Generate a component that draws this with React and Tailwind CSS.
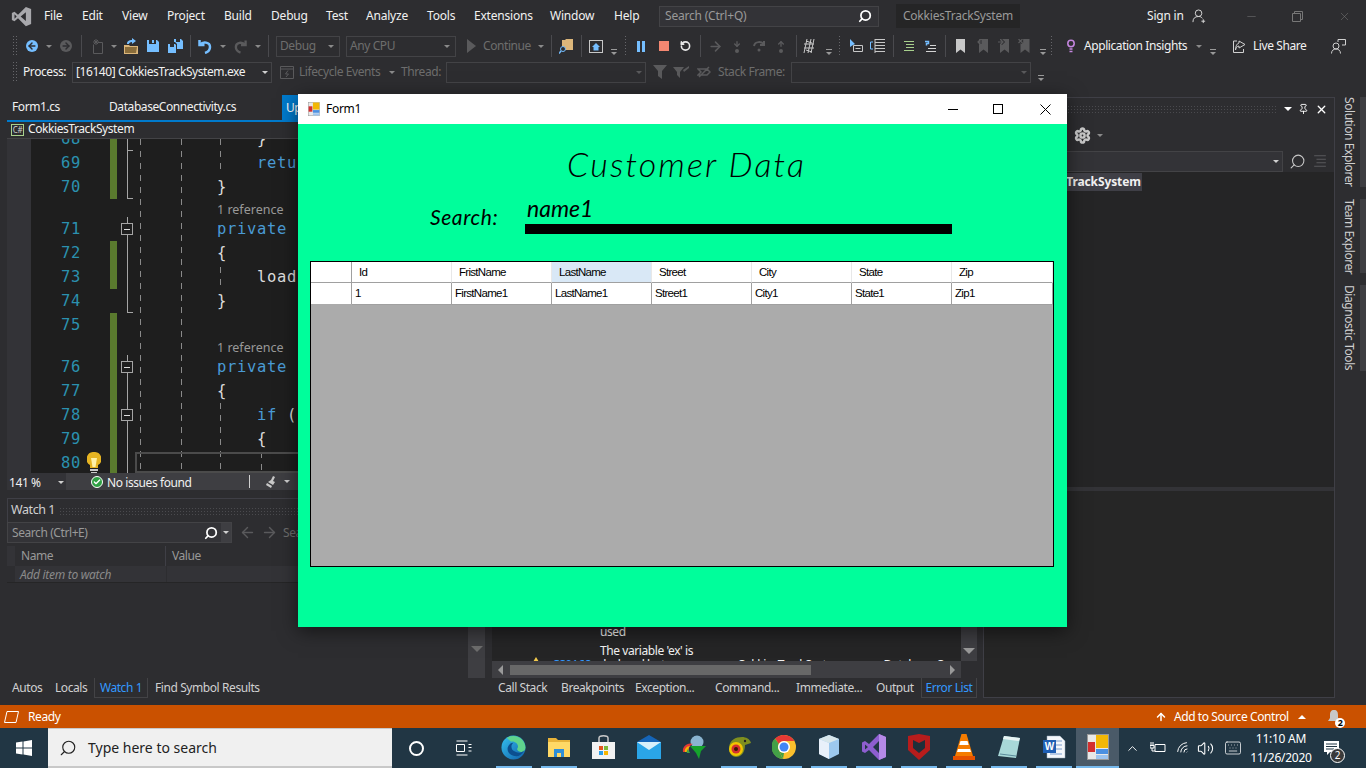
import { ArrowLeft, ArrowRight, ChevronUp, Search, Settings, Pin, X, Minus, Wifi, Volume2, Keyboard, RotateCw, ArrowUp, ArrowDown, Check } from "lucide-react";

const ui = "font-['Noto_Sans','Open_Sans',sans-serif]";
const mono = "font-['DejaVu_Sans_Mono','Liberation_Mono',monospace]";

function Caret({ className = "", tone = "border-t-[#8a8a8a]", size = "border-x-[3px] border-t-[3px]" }) {
  return <span className={`w-0 h-0 shrink-0 border-x-transparent ${size} ${tone} ${className}`}></span>;
}

function Overflow({ className = "" }) {
  return (
    <span className={`w-[6px] shrink-0 flex flex-col items-center gap-[2px] mt-[12px] ${className}`}>
      <span className="w-[6px] h-px bg-[#999]"></span>
      <span className="w-0 h-0 border-x-[3px] border-x-transparent border-t-[3px] border-t-[#999]"></span>
    </span>
  );
}

function Sep({ className = "" }) {
  return <span className={`w-px h-[22px] shrink-0 bg-[#4a4a4e] ${className}`}></span>;
}

function Grip({ className = "w-[5px]" }) {
  return <span className={`h-[22px] shrink-0 bg-[radial-gradient(#66666a_1px,transparent_1px)] bg-[length:3px_3px] ${className}`}></span>;
}

function Combo({ children, className = "" }) {
  return (
    <div className={`h-[21px] shrink-0 border border-[#434346] flex items-center pl-[3px] pr-[5px] justify-between ${className}`}>
      <span className="whitespace-nowrap">{children}</span>
      <Caret />
    </div>
  );
}

function Disk({ className = "", color = "#75beff" }) {
  return (
    <svg viewBox="0 0 12 12" className={`shrink-0 ${className}`}>
      <path d="M0 0h2v4h7V0h1l2 2v10H0z" fill={color} />
      <rect x="5" y="0" width="2" height="3" fill={color} />
    </svg>
  );
}

function Bookmark({ className = "", color = "#5a5a5c", children }) {
  return (
    <svg viewBox="0 0 11 14" className={`shrink-0 ${className}`}>
      <path d="M2 0h9v14l-4.500-3.500L2 14z" fill={color} />
      {children}
    </svg>
  );
}

function Lines({ className = "", color = "#d4d4d4" }) {
  return (
    <svg viewBox="0 0 12 12" className={`shrink-0 ${className}`} stroke={color} strokeWidth="1">
      <path d="M1 1.500h10M3 4.500h8M3 7.500h8M1 10.500h10" />
    </svg>
  );
}

function MenuBar() {
  const items = [
    ["File", "ml-[12px] w-[38px]"],
    ["Edit", "w-[40px]"],
    ["View", "w-[45px]"],
    ["Project", "w-[57px]"],
    ["Build", "w-[47px]"],
    ["Debug", "w-[55px]"],
    ["Test", "w-[40px]"],
    ["Analyze", "w-[61px]"],
    ["Tools", "w-[47px]"],
    ["Extensions", "w-[76px]"],
    ["Window", "w-[64px]"],
    ["Help", "w-[45px]"],
  ];
  return (
    <div className="h-[32px] shrink-0 flex items-center text-[#f1f1f1] tracking-[-0.2px]">
      <svg viewBox="0 0 24 24" className="ml-[11px] w-[21px] h-[21px] shrink-0" fill="#a8a8ac">
        <path fillRule="evenodd" d="M17 1 8 10 4 6.500 1 8v8l3 1.500L8 14l9 9 6-2.500V3.500zM17 7v10l-6-5zM4 9.500 6.500 12 4 14.500z" />
      </svg>
      {items.map(([label, w]) => (
        <span key={label} className={`shrink-0 whitespace-nowrap ${w}`}>{label}</span>
      ))}
      <div className="w-[220px] h-[21px] shrink-0 border border-[#434346] bg-[#333337] flex items-center justify-between pl-[5px] pr-[6px] text-[#999]">
        <span>Search (Ctrl+Q)</span>
        <Search className="w-[14px] h-[14px] text-white -scale-x-100" strokeWidth={3} />
      </div>
      <div className="ml-[17px] w-[124px] h-[24px] shrink-0 bg-[#252526] text-[#999] flex items-center justify-center">CokkiesTrackSystem</div>
      <span className="ml-[127px] w-[45px] shrink-0 whitespace-nowrap">Sign in</span>
      <svg viewBox="0 0 16 16" className="w-[15px] h-[15px] shrink-0 text-[#ddd]" fill="none" stroke="currentColor">
        <circle cx="7" cy="4.500" r="3.500" />
        <path d="M1 14c0-4 2-6 6-6 2 0 3 .5 4 2M12 11v4M10 13h4" />
      </svg>
      <Minus className="ml-[38px] w-[13px] h-[13px] text-[#777]" strokeWidth={1} />
      <svg viewBox="0 0 11 11" className="ml-[34px] w-[11px] h-[11px]" fill="none" stroke="#777">
        <path d="M.500 2.500h8v8h-8zM2.500 2.500v-2h8v8h-2" />
      </svg>
      <X className="ml-[35px] w-[13px] h-[13px] text-[#777]" strokeWidth={1} />
    </div>
  );
}

function DebugToolbar() {
  return (
    <div className="h-[28px] shrink-0 flex items-center pl-[12px] text-[#6d6d6d]">
      <Grip />
      <span className="ml-[9px] w-[12px] h-[12px] rounded-full bg-[#75beff] shrink-0 flex items-center justify-center">
        <ArrowLeft className="w-[10px] h-[10px] text-[#2d2d30]" strokeWidth={3.500} />
      </span>
      <Caret className="ml-[8px]" />
      <span className="ml-[8px] w-[12px] h-[12px] rounded-full bg-[#5a5a5c] shrink-0 flex items-center justify-center">
        <ArrowRight className="w-[10px] h-[10px] text-[#2d2d30]" strokeWidth={3.500} />
      </span>
      <Sep className="ml-[9px]" />
      <svg viewBox="0 0 13 15" className="ml-[8px] w-[13px] h-[15px] shrink-0" fill="none" stroke="#5a5a5c">
        <path d="M3.500 5.500v9h9v-11H8M6 0v6M3 3h6M4 1l4 4M8 1 4 5" />
      </svg>
      <Caret className="ml-[8px]" />
      <svg viewBox="0 0 14 16" className="ml-[7px] w-[14px] h-[16px] shrink-0">
        <path d="M0 7h5l1 1h8v8H0z" fill="#dcb67a" />
        <path d="M1 9h12l-1 6H1z" fill="#8a6d3b" />
        <path d="M3 6c0-3 2-4 5-4V0l4 3-4 3V4C6 4 5 5 5 6z" fill="#75beff" />
      </svg>
      <Disk className="ml-[9px] w-[12px] h-[12px]" />
      <svg viewBox="0 0 15 14" className="ml-[9px] w-[15px] h-[14px] shrink-0" fill="#75beff">
        <path d="M0 5h2v3h4V5h1l1 1v8H0z" />
        <path d="M6 0h2v3h4V0h1l2 2v8H9V5L7 3H6z" />
      </svg>
      <Sep className="ml-[7px]" />
      <svg viewBox="0 0 14 15" className="ml-[7px] w-[14px] h-[15px] shrink-0" fill="none" stroke="#75beff" strokeWidth="2.500">
        <path d="M1.500 1v5h5M2 6c3-4 10-3 10 2 0 3-2 5-5 6" />
      </svg>
      <Caret className="ml-[8px]" />
      <svg viewBox="0 0 14 15" className="ml-[8px] w-[13px] h-[15px] shrink-0" fill="none" stroke="#5a5a5c" strokeWidth="2.500">
        <path d="M12.500 1v5h-5M12 6C9 2 2 3 2 8c0 3 2 5 5 6" />
      </svg>
      <Caret className="ml-[8px]" />
      <Sep className="ml-[7px]" />
      <Combo className="ml-[7px] w-[64px]">Debug</Combo>
      <Combo className="ml-[6px] w-[110px]">Any CPU</Combo>
      <span className="ml-[11px] w-0 h-0 shrink-0 border-y-[7px] border-y-transparent border-l-[9px] border-l-[#5a5a5c]"></span>
      <span className="ml-[7px] w-[49px] shrink-0">Continue</span>
      <Caret className="ml-[6px]" />
      <Sep className="ml-[7px]" />
      <svg viewBox="0 0 14 16" className="ml-[7px] w-[14px] h-[16px] shrink-0">
        <path d="M3 2h3l1-1h7v11H3z" fill="#dcb67a" />
        <circle cx="4" cy="11" r="2.500" fill="#2d2d30" stroke="#75beff" />
        <path d="M2 13 0 15.500" stroke="#75beff" strokeWidth="1.500" />
      </svg>
      <Sep className="ml-[8px]" />
      <svg viewBox="0 0 14 13" className="ml-[7px] w-[14px] h-[13px] shrink-0">
        <rect x=".5" y=".5" width="13" height="12" fill="none" stroke="#c8c8c8" />
        <path d="M7 3 3 7h1.500v3.500h5V7H11z" fill="#75beff" />
      </svg>
      <Overflow className="ml-[8px]" />
      <Grip className="ml-[7px] w-[4px]" />
      <span className="ml-[9px] w-[8px] h-[11px] shrink-0 border-x-[3px] border-x-[#75beff]"></span>
      <span className="ml-[14px] w-[10px] h-[10px] shrink-0 bg-[#f48771]"></span>
      <RotateCw className="ml-[11px] w-[11px] h-[12px] shrink-0 text-[#e8e8e8] -scale-x-100" strokeWidth={3.500} />
      <Sep className="ml-[9px]" />
      <ArrowRight className="ml-[7px] w-[15px] h-[15px] shrink-0 text-[#5a5a5c]" strokeWidth={2.500} />
      <span className="ml-[10px] w-[7px] shrink-0 flex flex-col items-center text-[#5a5a5c]">
        <ArrowDown className="w-[8px] h-[8px]" strokeWidth={4} />
        <span className="w-[4px] h-[4px] mt-px rounded-full bg-[#5a5a5c]"></span>
      </span>
      <svg viewBox="0 0 12 12" className="ml-[13px] w-[12px] h-[12px] shrink-0" fill="none" stroke="#5a5a5c" strokeWidth="2">
        <path d="M1 6c1-5 8-5 10-1M11 1v4H7" />
        <circle cx="6" cy="10" r="1.500" fill="#5a5a5c" stroke="none" />
      </svg>
      <span className="ml-[12px] w-[8px] shrink-0 flex flex-col items-center text-[#5a5a5c]">
        <ArrowUp className="w-[8px] h-[8px]" strokeWidth={4} />
        <span className="w-[4px] h-[4px] mt-px rounded-full bg-[#5a5a5c]"></span>
      </span>
      <Sep className="ml-[11px]" />
      <svg viewBox="0 0 12 16" className="ml-[6px] w-[12px] h-[16px] shrink-0" fill="none" stroke="#c8c8c8">
        <path d="M1 6h10M1 10h10M4 1 1 15M8 1 5 15M11 1 8 15M3 3l6 2M3 12l6 2" />
      </svg>
      <Overflow className="ml-[11px]" />
      <Grip className="ml-[6px] w-[4px]" />
      <svg viewBox="0 0 13 14" className="ml-[8px] w-[13px] h-[14px] shrink-0">
        <path d="M0 0l5 5-2 1-3 2z" fill="#75beff" />
        <path d="M3.500 6.500h9v6h-9zM5.500 9.500h5" fill="none" stroke="#c8c8c8" />
      </svg>
      <svg viewBox="0 0 15 14" className="ml-[7px] w-[15px] h-[14px] shrink-0" fill="none">
        <path d="M3 3H.5v7H3M1 0v0" stroke="#75beff" />
        <path d="M5 .5h10M5 3.500h10M5 6.500h10M5 9.500h10M5 12.500h10M5 0v14" stroke="#c8c8c8" />
      </svg>
      <Sep className="ml-[8px]" />
      <Lines className="ml-[9px] w-[12px] h-[12px]" color="#a8d08d" />
      <svg viewBox="0 0 11 13" className="ml-[10px] w-[11px] h-[13px] shrink-0" fill="none" strokeWidth="1">
        <path d="M0 1.500h3.500v2H1.500v2" stroke="#75beff" strokeWidth="1.500" />
        <path d="M5 5.500h6M3 8.500h8M1 11.500h10" stroke="#d4d4d4" />
      </svg>
      <Sep className="ml-[9px]" />
      <Bookmark className="ml-[8px] w-[11px] h-[14px]" color="#c8c8c8" />
      <Bookmark className="ml-[12px] w-[11px] h-[14px]">
        <path d="M0 3h5M2.500 1 0 3l2.500 2" fill="none" stroke="#2d2d30" strokeWidth="3" />
        <path d="M1 3h5M3 1 1 3l2 2" fill="none" stroke="#5a5a5c" strokeWidth="1.200" />
      </Bookmark>
      <Bookmark className="ml-[10px] w-[11px] h-[14px]">
        <path d="M0 3h5M3 1l2 2-2 2" fill="none" stroke="#2d2d30" strokeWidth="3" />
        <path d="M0 3h5M3 1l2 2-2 2" fill="none" stroke="#5a5a5c" strokeWidth="1.200" />
      </Bookmark>
      <Bookmark className="ml-[9px] w-[12px] h-[14px]">
        <path d="M0 0l4 4M4 0 0 4" fill="none" stroke="#2d2d30" strokeWidth="3" />
        <path d="M0 0l4 4M4 0 0 4" fill="none" stroke="#5a5a5c" strokeWidth="1.200" />
      </Bookmark>
      <Overflow className="ml-[10px]" />
      <Grip className="ml-[4px] w-[4px]" />
      <svg viewBox="0 0 8 15" className="ml-[13px] w-[8px] h-[15px] shrink-0" fill="none" stroke="#c586e0" strokeWidth="1.500">
        <circle cx="4" cy="4.500" r="3.200" />
        <path d="M2.500 10h3M2.500 12.500h3M4 14.500h0" />
      </svg>
      <span className="ml-[9px] w-[105px] shrink-0 whitespace-nowrap text-[#f1f1f1]">Application Insights</span>
      <Caret className="ml-[7px]" />
      <Overflow className="ml-[8px]" />
      <svg viewBox="0 0 13 13" className="ml-[17px] w-[13px] h-[13px] shrink-0" fill="none" stroke="#d0d0d0">
        <path d="M4 1H.5v11.500h10V9M6 1l6 3.500L6 8V6C4 6 3 8 2.500 10 2.500 6 4 3.500 6 3z" />
      </svg>
      <span className="ml-[7px] w-[53px] shrink-0 whitespace-nowrap text-[#f1f1f1]">Live Share</span>
      <svg viewBox="0 0 15 15" className="ml-[25px] w-[15px] h-[15px] shrink-0" fill="none" stroke="#d0d0d0">
        <circle cx="5" cy="7" r="3" />
        <path d="M.5 14.500c0-3 2-4.500 4.500-4.500s4.500 1.500 4.500 4.500M7 3V.5h7.500V6H11" />
      </svg>
    </div>
  );
}

function ProcessToolbar() {
  return (
    <div className="h-[24px] shrink-0 flex items-center pl-[12px] text-[#6d6d6d]">
      <Grip />
      <span className="ml-[6px] w-[42px] shrink-0 text-[#f1f1f1]">Process:</span>
      <div className="ml-[7px] w-[200px] h-[21px] shrink-0 border border-[#434346] text-[#f1f1f1] flex items-center justify-between pl-[3px] pr-[3px]">
        <span className="whitespace-nowrap">[16140] CokkiesTrackSystem.exe</span>
        <Caret tone="border-t-[#d0d0d0]" />
      </div>
      <svg viewBox="0 0 14 13" className="ml-[8px] w-[14px] h-[13px] shrink-0" fill="none" stroke="#5a5a5c">
        <path d="M.5.500h13v12H.5zM.5 3h13M8 4.500 5.500 8h3L6 11" />
      </svg>
      <span className="ml-[5px] w-[84px] shrink-0 whitespace-nowrap">Lifecycle Events</span>
      <Caret className="ml-[6px]" />
      <span className="ml-[6px] w-[41px] shrink-0">Thread:</span>
      <div className="ml-[4px] w-[200px] h-[21px] shrink-0 border border-[#434346] flex items-center justify-end pr-[3px]">
        <Caret tone="border-t-[#5a5a5c]" />
      </div>
      <svg viewBox="0 0 14 14" className="ml-[7px] w-[14px] h-[14px] shrink-0" fill="#5a5a5c">
        <path d="M0 0h14L9 6v8L5 11V6z" />
      </svg>
      <svg viewBox="0 0 16 14" className="ml-[6px] w-[16px] h-[14px] shrink-0" fill="#5a5a5c">
        <path d="M0 2h11L7 7v6L4 10V7zM10 5l6-4v2l-5 4z" />
      </svg>
      <svg viewBox="0 0 14 12" className="ml-[8px] w-[14px] h-[12px] shrink-0" fill="none" stroke="#5a5a5c" strokeWidth="1.500">
        <path d="M1 3h9l3 3-3 3H1l3-3zM2 11 12 1" />
      </svg>
      <span className="ml-[7px] w-[67px] shrink-0 whitespace-nowrap">Stack Frame:</span>
      <div className="ml-[6px] w-[240px] h-[21px] shrink-0 border border-[#434346] flex items-center justify-end pr-[3px]">
        <Caret tone="border-t-[#5a5a5c]" />
      </div>
      <Overflow className="ml-[7px]" />
    </div>
  );
}

function CodeRow({ n, green, box, tick, noLine, bulb, children }) {
  return (
    <div className="h-[24px] shrink-0 flex items-center">
      <div className="w-[24px] h-full shrink-0 bg-[#333337]"></div>
      <div className="w-[50px] shrink-0 text-right text-[#2b91af] pt-[2px]">{n}</div>
      <div className="w-[29px] h-full shrink-0 flex items-center justify-center">
        {bulb && (
          <svg viewBox="0 0 14 23" className="w-[14px] h-[23px] -translate-x-[2px]">
            <path d="M7 0a7 7 0 0 1 4 13v3H3v-3A7 7 0 0 1 7 0z" fill="#e6b422" />
            <path d="M4 6h6L8.500 15h-3z" fill="#fff1a8" />
            <rect x="3" y="17" width="8" height="2" fill="#c8c8c8" />
            <rect x="4" y="20" width="6" height="2" fill="#c8c8c8" />
          </svg>
        )}
      </div>
      <div className={`w-[7px] h-full shrink-0 ${green ? "bg-[#5a7a2e]" : ""}`}></div>
      <div className="w-[20px] h-full shrink-0 relative flex items-center justify-center">
        {!noLine && <span className="absolute left-[10px] top-0 bottom-0 w-px bg-[#a5a5a5]"></span>}
        {tick && <span className="absolute left-[10px] bottom-0 w-[6px] h-px bg-[#a5a5a5]"></span>}
        {box && (
          <span className="relative w-[12px] h-[12px] border border-[#a5a5a5] bg-[#1e1e1e] flex items-center justify-center">
            <span className="w-[6px] h-px bg-[#dcdcdc]"></span>
          </span>
        )}
      </div>
      <div className="w-[80px] shrink-0"></div>
      <div className="whitespace-pre text-[#dcdcdc] pt-[2px]">{children}</div>
    </div>
  );
}

function LensRow({ green }) {
  return (
    <div className="h-[18px] shrink-0 flex items-center">
      <div className="w-[24px] h-full shrink-0 bg-[#333337]"></div>
      <div className="w-[79px] shrink-0"></div>
      <div className={`w-[7px] h-full shrink-0 ${green ? "bg-[#5a7a2e]" : ""}`}></div>
      <div className="w-[100px] shrink-0"></div>
      <span className={`text-[12.500px] tracking-normal text-[#999] pt-[4px] ${ui}`}>1 reference</span>
    </div>
  );
}

const kw = "text-[#4a9ad4]";

function Editor() {
  const guides = ["left-[133px] top-0 h-[334px]", "left-[174px] top-0 h-[334px]", "left-[213px] top-0 h-[34px]", "left-[213px] top-[128px] h-[20px]", "left-[213px] top-[264px] h-[70px]", "left-[254px] top-[313px] h-[21px]"];
  return (
    <div className={`h-[334px] shrink-0 bg-[#1e1e1e] relative overflow-hidden text-[15.500px] tracking-[0.67px] ${mono}`}>
      <div className="flex flex-col -mt-[12px]">
        <CodeRow n="68" green tick>{"    }"}</CodeRow>
        <CodeRow n="69" green><span className={kw}>{"    return"}</span></CodeRow>
        <CodeRow n="70" green tick>{"}"}</CodeRow>
        <LensRow />
        <CodeRow n="71" box><span className={kw}>private</span></CodeRow>
        <CodeRow n="72" green>{"{"}</CodeRow>
        <CodeRow n="73" green>{"    load"}</CodeRow>
        <CodeRow n="74" tick>{"}"}</CodeRow>
        <CodeRow n="75" green noLine></CodeRow>
        <LensRow green />
        <CodeRow n="76" green box><span className={kw}>private</span></CodeRow>
        <CodeRow n="77" green>{"{"}</CodeRow>
        <CodeRow n="78" green box><span className={kw}>{"    if"}</span>{" ("}</CodeRow>
        <CodeRow n="79" green>{"    {"}</CodeRow>
        <CodeRow n="80" green bulb></CodeRow>
      </div>
      {guides.map((g) => (
        <span key={g} className={`absolute w-px bg-[repeating-linear-gradient(to_bottom,#8a8a8a_0,#8a8a8a_6px,transparent_6px,transparent_12px)] ${g}`}></span>
      ))}
      <span className="absolute left-[128px] top-[313px] w-[500px] h-[21px] border-2 border-[#4b4b4b]"></span>
    </div>
  );
}

function EditorArea() {
  return (
    <div className="h-[395px] shrink-0 flex flex-col">
      <div className="h-[25px] shrink-0 flex items-center relative text-[#f1f1f1]">
        <span className="ml-[5px] w-[97px] shrink-0 pb-[2px]">Form1.cs</span>
        <span className="w-[173px] shrink-0 whitespace-nowrap pb-[2px]">DatabaseConnectivity.cs</span>
        <span className="h-full w-[60px] bg-[#007acc] text-white pl-[4px] flex items-center">Up</span>
      </div>
      <div className="h-[2px] shrink-0 bg-[#007acc]"></div>
      <div className="h-[17px] shrink-0 flex items-center text-[#f1f1f1] border-b border-[#434346] bg-[#2d2d30]">
        <span className="ml-[4px] w-[13px] h-[12px] shrink-0 border border-[#a8d08d] text-[8px] leading-[10px] text-center text-[#d0d0d0]">C#</span>
        <span className="ml-[4px] pb-[2px]">CokkiesTrackSystem</span>
      </div>
      <Editor />
      <div className="h-[17px] shrink-0 flex items-center bg-[#3e3e42] text-[#f1f1f1]">
        <div className="w-[59px] h-full shrink-0 bg-[#333337] flex items-center justify-between pl-[2px] pr-[2px] pt-[2px]">
          <span>141 %</span>
          <Caret tone="border-t-[#d0d0d0]" />
        </div>
        <span className="ml-[25px] w-[12px] h-[12px] rounded-full bg-[#2ea043] border border-white shrink-0 flex items-center justify-center">
          <Check className="w-[8px] h-[8px] text-white" strokeWidth={4} />
        </span>
        <span className="ml-[4px] w-[85px] shrink-0 whitespace-nowrap pt-[2px]">No issues found</span>
        <span className="ml-[57px] w-px h-[13px] bg-[#d0d0d0] shrink-0"></span>
        <svg viewBox="0 0 12 12" className="ml-[15px] w-[12px] h-[12px] shrink-0" fill="#c8c8c8">
          <path d="M8 0l2 1-2 4 2 1-2 3-5-3 3-2 2-4zM2 7l5 3-1 2-5-3z" />
        </svg>
        <Caret className="ml-[7px]" tone="border-t-[#d0d0d0]" />
      </div>
    </div>
  );
}

function Watch() {
  return (
    <div className="w-[478px] shrink-0 flex flex-col">
      <div className="h-[24px] shrink-0 flex items-center border-t border-l border-[#3f3f46] text-[#d0d0d0]">
        <span className="ml-[3px] w-[48px] shrink-0 text-[12.500px]">Watch 1</span>
        <span className="flex-1 h-[8px] mr-2 bg-[radial-gradient(#4a4a4e_1px,transparent_1px)] bg-[length:3px_3px]"></span>
      </div>
      <div className="h-[21px] shrink-0 flex items-center">
        <div className="w-[225px] h-full shrink-0 bg-[#333337] border border-[#434346] flex items-center justify-between pl-[4px] text-[#999]">
          <span>Search (Ctrl+E)</span>
          <div className="flex items-center h-full">
            <Search className="w-[14px] h-[14px] text-white -scale-x-100" strokeWidth={3} />
            <span className="ml-[3px] w-[10px] h-full bg-[#3e3e42] flex items-center justify-center"><Caret tone="border-t-[#d0d0d0]" /></span>
          </div>
        </div>
        <ArrowLeft className="ml-[7px] w-[17px] h-[17px] text-[#5a5a5c]" strokeWidth={2} />
        <ArrowRight className="ml-[5px] w-[17px] h-[17px] text-[#5a5a5c]" strokeWidth={2} />
        <span className="ml-[5px] text-[#6d6d6d]">Search Depth:</span>
      </div>
      <div className="h-[23px] shrink-0 flex items-center text-[#999] pt-[3px]">
        <span className="w-[159px] h-full shrink-0 pl-[6px] flex items-center border-l-[8px] border-[#333337] border-r border-r-[#3f3f46]">Name</span>
        <span className="pl-[6px]">Value</span>
      </div>
      <div className="h-[17px] shrink-0 flex items-center bg-[#333337] border-b border-[#252526] text-[#8a8a8a] italic">
        <span className="w-[160px] h-full shrink-0 pl-[5px] pt-[2px] flex items-center border-l-[8px] border-[#2d2d30] border-r border-r-[#2d2d30] whitespace-nowrap tracking-[-0.3px]">Add item to watch</span>
      </div>
      <div className="flex-1 flex justify-end">
        <div className="w-[17px] bg-[#3e3e42] flex flex-col justify-end items-center pb-[26px]">
          <Caret size="border-x-[6px] border-t-[6px]" tone="border-t-[#6d6d6d]" />
        </div>
      </div>
      <div className="h-[20px] shrink-0 flex items-center text-[#d0d0d0] relative">
        <span className="ml-[5px] w-[43px] shrink-0">Autos</span>
        <span className="w-[39px] shrink-0">Locals</span>
        <span className="w-[54px] h-full shrink-0 border-x border-b border-[#434346] text-[#3399ff] flex items-center justify-center">Watch 1</span>
        <span className="ml-[7px] whitespace-nowrap">Find Symbol Results</span>
      </div>
    </div>
  );
}

function ErrorList() {
  return (
    <div className="ml-[7px] w-[485px] shrink-0 flex flex-col">
      <div className="flex-1 flex min-h-0">
        <div className="flex-1 flex flex-col min-w-0">
          <div className="h-[163px] shrink-0 bg-[#252526] overflow-hidden text-[#f1f1f1] pl-[108px] pt-[124px]">
            <div className="h-[19px] flex items-center">used</div>
            <div className="h-[19px] flex items-center whitespace-nowrap">The variable 'ex' is</div>
            <div className="h-[19px] -mt-[1px] -ml-[70px] flex items-start leading-[12px] whitespace-nowrap">
              <span className="-mt-[2px] w-0 h-0 border-x-[6px] border-x-transparent border-b-[10px] border-b-[#f2c94c]"></span>
              <span className="ml-[10px] w-[40px] text-[#3399ff]">CS0168</span>
              <span className="ml-[8px] mr-[40px]">declared but never</span>
              <span>CokkiesTrackSystem</span>
              <span className="ml-[40px]">Database Connectivity</span>
            </div>
          </div>
          <div className="h-[17px] shrink-0 bg-[#3e3e42] flex items-center justify-between pl-[6px] pr-[6px]">
            <span className="w-0 h-0 border-y-[5px] border-y-transparent border-r-[5px] border-r-[#999]"></span>
            <span className="ml-[7px] mr-auto w-[301px] h-[10px] bg-[#686868]"></span>
            <span className="w-0 h-0 border-y-[5px] border-y-transparent border-l-[5px] border-l-[#999]"></span>
          </div>
        </div>
        <div className="w-[16px] shrink-0 flex flex-col">
          <div className="h-[163px] bg-[#3e3e42] flex flex-col justify-end items-center pb-[7px]">
            <Caret size="border-x-[6px] border-t-[6px]" tone="border-t-[#999]" />
          </div>
        </div>
      </div>
      <div className="h-[20px] shrink-0 flex items-center text-[#d0d0d0]">
        <span className="ml-[6px] w-[63px] shrink-0 whitespace-nowrap">Call Stack</span>
        <span className="w-[74px] shrink-0">Breakpoints</span>
        <span className="w-[80px] shrink-0">Exception...</span>
        <span className="w-[81px] shrink-0">Command...</span>
        <span className="w-[80px] shrink-0">Immediate...</span>
        <span className="w-[45px] shrink-0">Output</span>
        <span className="w-[56px] h-full shrink-0 border-x border-b border-[#434346] text-[#3399ff] flex items-center justify-center whitespace-nowrap">Error List</span>
      </div>
    </div>
  );
}

function SolutionPanel() {
  return (
    <div className="ml-[6px] w-[352px] mt-[2px] h-[601px] shrink-0 border border-[#3f3f46] flex flex-col">
      <div className="h-[22px] shrink-0 flex items-center justify-end pr-[6px] text-white">
        <span className="flex-1 h-[8px] ml-[20px] mr-[8px] bg-[radial-gradient(#4a4a4e_1px,transparent_1px)] bg-[length:3px_3px]"></span>
        <Caret size="border-x-[4px] border-t-[4px]" tone="border-t-white" />
        <Pin className="ml-[6px] w-[11px] h-[12px]" strokeWidth={2} />
        <X className="ml-[6px] w-[13px] h-[13px]" strokeWidth={2.500} />
      </div>
      <div className="h-[30px] shrink-0 flex items-center pl-[90px]">
        <Settings className="w-[17px] h-[17px] text-[#c8c8c8]" strokeWidth={3.500} />
        <Caret className="ml-[6px]" />
      </div>
      <div className="h-[22px] shrink-0 flex items-center">
        <div className="w-[299px] h-[21px] shrink-0 bg-[#333337] border border-[#434346] flex items-center justify-end pr-[3px]">
          <Caret tone="border-t-[#d0d0d0]" />
        </div>
        <Search className="ml-[6px] w-[17px] h-[17px] text-[#c8c8c8] -scale-x-100" strokeWidth={1.500} />
        <Lines className="ml-[7px] w-[14px] h-[14px]" color="#5a5a5c" />
      </div>
      <div className="h-[315px] shrink-0 bg-[#252526] pl-[35px] pt-[1px]">
        <span className="inline-flex h-[18px] items-center bg-[#3f3f46] text-[#f1f1f1] font-bold pl-[1px] pr-[1px] tracking-[-0.1px]">CokkiesTrackSystem</span>
      </div>
      <div className="h-[4px] shrink-0 bg-[#333337]"></div>
      <div className="flex-1 bg-[#262626]"></div>
    </div>
  );
}

function SideTabs() {
  const tabs = [
    ["Solution Explorer", "h-[90px]"],
    ["Team Explorer", "h-[74px]"],
    ["Diagnostic Tools", "h-[86px]"],
  ];
  return (
    <div className="flex-1 flex flex-col gap-[12px] pt-[2px] pl-[5px]">
      {tabs.map(([label, h]) => (
        <div key={label} className={`flex justify-between ${h}`}>
          <span className="[writing-mode:vertical-rl] text-[#d0d0d0] whitespace-nowrap">{label}</span>
          <span className="w-[6px] bg-[#3e3e42]"></span>
        </div>
      ))}
    </div>
  );
}

function StatusBar() {
  return (
    <div className="h-[23px] shrink-0 bg-[#ca5100] flex items-center text-white">
      <svg viewBox="0 0 15 12" className="ml-[4px] w-[15px] h-[12px] shrink-0" fill="none" stroke="#fff">
        <path d="M3 .5h11.500L12 11.500H.5z" />
      </svg>
      <span className="ml-[9px] w-[32px] shrink-0">Ready</span>
      <ArrowUp className="ml-[1095px] w-[12px] h-[14px] shrink-0" strokeWidth={3} />
      <span className="ml-[7px] w-[118px] shrink-0 whitespace-nowrap">Add to Source Control</span>
      <span className="ml-[6px] w-0 h-0 shrink-0 border-x-[4px] border-x-transparent border-b-[4px] border-b-white"></span>
      <span className="ml-[21px] relative w-[14px] h-[14px] shrink-0">
        <svg viewBox="0 0 14 14" className="w-[14px] h-[14px]" fill="#c8c8c8">
          <path d="M7 0c3 0 4 2 4 5v3l2 3H1l2-3V5c0-3 1-5 4-5z" />
        </svg>
        <span className="absolute -right-[4px] -bottom-[4px] w-[10px] h-[10px] rounded-full bg-white text-black text-[9px] font-bold leading-[10px] text-center">2</span>
      </span>
    </div>
  );
}

function Edge() {
  return (
    <svg viewBox="0 0 26 26" className="w-[25px] h-[25px]">
      <defs>
        <linearGradient id="edgeA" x1="0" y1="0" x2="1" y2="1">
          <stop offset="0" stopColor="#35c1f1" />
          <stop offset="1" stopColor="#0f5fa8" />
        </linearGradient>
      </defs>
      <circle cx="13" cy="13" r="12.500" fill="url(#edgeA)" />
      <path d="M6 3c8-5 19 0 19.500 10 0 4-4 6-7 4-2-1-2-3-1-4 1-3-3-7-7-6z" fill="#5fd38d" />
      <path d="M16 22c-6 0-10-4-9-9 1-3 3-5 6-5-3 2-3 7 1 9 3 2 7 2 10-1-2 4-5 6-8 6z" fill="#0c4f8f" />
    </svg>
  );
}

function Chrome() {
  return (
    <svg viewBox="0 0 24 24" className="w-[24px] h-[24px]">
      <circle cx="12" cy="12" r="12" fill="#fbc02d" />
      <path d="M12 0a12 12 0 0 1 10.400 6H12a6 6 0 0 0-5.200 3L3 3.500A12 12 0 0 1 12 0z" fill="#e53935" />
      <path d="M3 3.500 6.800 9a6 6 0 0 0 0 6l4 9A12 12 0 0 1 3 3.500z" fill="#43a047" />
      <path d="M6.800 15a6 6 0 0 0 5.200 3l-1 6H11z" fill="#43a047" />
      <circle cx="12" cy="12" r="6" fill="#fff" />
      <circle cx="12" cy="12" r="4.500" fill="#4285f4" />
    </svg>
  );
}

function Word() {
  return (
    <svg viewBox="0 0 24 24" className="w-[24px] h-[24px]">
      <path d="M5 1h13l5 5v17H5z" fill="#f4f7fb" stroke="#9ab" strokeWidth=".5" />
      <path d="M8 6h12M14 10h6M14 14h6M8 19h12" stroke="#7a9ccc" strokeWidth="1" />
      <rect x="1" y="5" width="13" height="13" fill="#1f5fb4" />
      <text x="7.500" y="15" textAnchor="middle" fontSize="10" fontWeight="700" fill="#fff" fontFamily="Liberation Sans, sans-serif">W</text>
    </svg>
  );
}

function FormAppIcon({ className = "" }) {
  return (
    <svg viewBox="0 0 22 26" className={className}>
      <rect x=".5" y=".5" width="21" height="25" fill="#e8e8e8" stroke="#999" />
      <rect x="9" y="1" width="12" height="13" fill="#f2b705" />
      <rect x="1" y="8" width="7" height="10" fill="#d32f2f" />
      <rect x="9" y="15" width="12" height="5" fill="#4a90e2" />
      <rect x="9" y="21" width="12" height="4" fill="#9cc4f0" />
    </svg>
  );
}

const taskIcons = [
  { id: "edge", on: true, icon: <Edge /> },
  {
    id: "folder",
    on: true,
    icon: (
      <svg viewBox="0 0 22 20" className="w-[22px] h-[20px]">
        <path d="M0 1h8l2 2h12v17H0z" fill="#e8b339" />
        <path d="M0 5h22v15H0z" fill="#ffd966" />
        <path d="M6 12h10v8h-3v-4H9v4H6z" fill="#2f8fd8" />
      </svg>
    ),
  },
  {
    id: "store",
    icon: (
      <svg viewBox="0 0 23 24" className="w-[23px] h-[24px]">
        <path d="M7 7V3a4 2 0 0 1 9 0v4" fill="none" stroke="#c8c8c8" strokeWidth="1.500" />
        <rect y="7" width="23" height="17" fill="#f2f2f2" />
        <rect x="7" y="11" width="4" height="4" fill="#e2561f" />
        <rect x="12" y="11" width="4" height="4" fill="#7db93a" />
        <rect x="7" y="16" width="4" height="4" fill="#2a9ee8" />
        <rect x="12" y="16" width="4" height="4" fill="#f7b500" />
      </svg>
    ),
  },
  {
    id: "mail",
    icon: (
      <svg viewBox="0 0 24 24" className="w-[24px] h-[24px]">
        <path d="M0 7 12 0l12 7v17H0z" fill="#1565b8" />
        <path d="M0 7h24v17H0z" fill="#2aa5e8" />
        <path d="M0 7h24l-12 8z" fill="#d8f0fb" />
      </svg>
    ),
  },
  {
    id: "idm",
    icon: (
      <svg viewBox="0 0 24 24" className="w-[24px] h-[24px]">
        <circle cx="15" cy="7" r="6.500" fill="#8ab4d0" />
        <path d="M1 17C0 11 6 7 11 9c-3 1-5 4-4 8z" fill="#e53935" />
        <path d="M3 17c-1-3 2-6 5-6-2 2-2 4-1 6z" fill="#f7b500" />
        <path d="M5 18c-1-1 0-3 1-4l2 4z" fill="#43a047" />
        <path d="M8 11h16l-5 5-2 8-3-6z" fill="#15a32c" />
      </svg>
    ),
  },
  {
    id: "chameleon",
    on: true,
    icon: (
      <svg viewBox="0 0 24 24" className="w-[24px] h-[24px]">
        <path d="M2 13C2 5 9 2 15 2c4 0 8 2 9 6l-6 2c0 8-4 12-9 12-4 0-7-4-7-9z" fill="#7f8f1f" />
        <circle cx="9" cy="14" r="7" fill="#f2c500" />
        <circle cx="9" cy="14" r="4.500" fill="#d32f2f" />
        <circle cx="9" cy="14" r="2" fill="#3a1a00" />
        <circle cx="18" cy="6" r="1.200" fill="#222" />
      </svg>
    ),
  },
  { id: "chrome", on: true, icon: <Chrome /> },
  {
    id: "cube",
    on: true,
    icon: (
      <svg viewBox="0 0 20 24" className="w-[20px] h-[24px]">
        <path d="M10 0 20 4v15l-10 5L0 19V4z" fill="#9cc8ee" />
        <path d="M10 0 20 4 10 8 0 4z" fill="#d8e6ea" />
        <path d="M0 4l10 4v16L0 19z" fill="#e8f0fa" />
      </svg>
    ),
  },
  {
    id: "vs",
    on: true,
    icon: (
      <svg viewBox="0 0 24 26" className="w-[24px] h-[26px]">
        <path fillRule="evenodd" d="M17 0 7 10 3 7 0 8.500v9L3 19l4-3 10 10 7-3V3zM17 7v12l-6-6zM3 10.500 6 13l-3 2.500z" fill="#8e5ed0" />
        <path d="M17 0l7 3v20l-7 3v-7V7z" fill="#b58ae8" />
      </svg>
    ),
  },
  {
    id: "mcafee",
    on: true,
    icon: (
      <svg viewBox="0 0 22 26" className="w-[22px] h-[26px]">
        <path d="M0 2l11-2 11 2v14l-11 10L0 16z" fill="#b71c1c" />
        <path d="M5 6l6 3 6-3v8l-6 5-6-5z" fill="#1f2f3a" />
      </svg>
    ),
  },
  {
    id: "vlc",
    on: true,
    icon: (
      <svg viewBox="0 0 22 26" className="w-[22px] h-[26px]">
        <path d="M8.500 0h5L20 22H2z" fill="#f57c00" />
        <path d="M7.500 7h7l1.200 4H6.300zM5 15h12l1 3H4z" fill="#fff" />
        <path d="M0 22h22v4H0z" fill="#e65100" />
      </svg>
    ),
  },
  {
    id: "notepad",
    on: true,
    icon: (
      <svg viewBox="0 0 24 24" className="w-[24px] h-[24px]">
        <path d="M7 1 23 3l-4 20L1 21z" fill="#a8d8d8" />
        <path d="M7 1 23 3l-1 3L6 4z" fill="#e8f4f4" />
        <path d="M3 19l16 2" stroke="#5a8a9a" />
      </svg>
    ),
  },
  { id: "word", on: true, icon: <Word /> },
];

function Taskbar() {
  return (
    <div className="h-[40px] shrink-0 bg-[#213644] flex items-stretch text-white tracking-normal">
      <div className="w-[48px] shrink-0 flex items-center justify-center">
        <svg viewBox="0 0 16 16" className="w-[16px] h-[16px]" fill="#fff">
          <path d="M0 2.500 6.500 1.600V7.500H0zM7.500 1.500 16 0v7.500H7.500zM0 8.500h6.500v5.900L0 13.500zM7.500 8.500H16V16l-8.500-1.400z" />
        </svg>
      </div>
      <div className="w-[344px] shrink-0 bg-[#f0f0f0] border-t border-b-2 border-[#c8c8c8] flex items-center text-[#222]">
        <Search className="ml-[11px] w-[18px] h-[18px] -scale-x-100" strokeWidth={1.500} />
        <span className="ml-[11px] text-[14px]">Type here to search</span>
      </div>
      <div className="w-[48px] shrink-0 flex items-center justify-center">
        <span className="w-[15px] h-[15px] rounded-full border-[2.500px] border-white"></span>
      </div>
      <div className="w-[48px] shrink-0 flex items-center justify-center">
        <svg viewBox="0 0 16 16" className="w-[16px] h-[16px]" fill="none" stroke="#fff">
          <path d="M.5 1h11M.5 15h11M.5 4.500h8v7h-8zM12.500 4.500h3M12.500 7.500h3v0M12.500 11h3" />
        </svg>
      </div>
      <div className="w-[3px] shrink-0"></div>
      {taskIcons.map((t) => (
        <div key={t.id} className="w-[45px] shrink-0 flex flex-col items-center">
          <div className="flex-1 flex items-center justify-center">{t.icon}</div>
          <span className={`w-[36px] h-[2px] ${t.on ? "bg-[#76b9ed]" : ""}`}></span>
        </div>
      ))}
      <div className="w-[43px] shrink-0 flex flex-col items-center bg-[#4a5a68]">
        <div className="flex-1 flex items-center justify-center">
          <FormAppIcon className="w-[22px] h-[26px]" />
        </div>
        <span className="w-full h-[2px] bg-[#76b9ed]"></span>
      </div>
      <div className="flex items-center ml-[6px]">
        <ChevronUp className="w-[15px] h-[15px] shrink-0" strokeWidth={1.500} />
        <svg viewBox="0 0 16 14" className="ml-[10px] w-[16px] h-[14px] shrink-0" fill="none" stroke="#fff">
          <path d="M5 3.500h10v7H5zM1 1v3M3 1v3M0 4.500h4V7H0zM2 7v3h3" />
        </svg>
        <Wifi className="ml-[10px] w-[15px] h-[15px] shrink-0 rotate-[-45deg]" strokeWidth={1.500} />
        <Volume2 className="ml-[6px] w-[17px] h-[17px] shrink-0" strokeWidth={1.500} />
        <Keyboard className="ml-[7px] w-[24px] h-[18px] shrink-0" strokeWidth={1} />
        <div className="ml-[7px] w-[58px] shrink-0 flex flex-col items-center text-[12px] leading-[19px] whitespace-nowrap tracking-[-0.25px]">
          <span>11:10 AM</span>
          <span>11/26/2020</span>
        </div>
        <span className="ml-[14px] relative w-[15px] h-[14px] shrink-0">
          <svg viewBox="0 0 15 14" className="w-[15px] h-[14px]">
            <path d="M0 0h15v11H6l-3 3v-3H0z" fill="#fff" />
            <path d="M2 3h11M2 5.500h11M2 8h8" stroke="#213644" />
          </svg>
          <span className="absolute -right-[6px] -bottom-[8px] w-[15px] h-[15px] rounded-full bg-[#3a3a3a] border border-white text-[10px] leading-[13px] text-center">2</span>
        </span>
      </div>
    </div>
  );
}

function GridHead({ label, active }) {
  return (
    <div className={`h-[21px] flex items-center pl-[7px] pt-[2px] border-r border-b border-r-[#e8e8e8] border-b-[#a0a0a0] ${active ? "bg-[#d9e8f6]" : "bg-white"}`}>
      {label}
    </div>
  );
}

function GridCell({ label }) {
  return <div className="h-[22px] flex items-center pl-[3px] bg-white border-r border-b border-[#a0a0a0]">{label}</div>;
}

function FormWindow() {
  const heads = ["Id", "FristName", "LastName", "Street", "City", "State", "Zip"];
  const cells = ["1", "FirstName1", "LastName1", "Street1", "City1", "State1", "Zip1"];
  return (
    <div className="absolute left-[298px] top-[94px] w-[769px] h-[533px] flex flex-col shadow-[0_4px_18px_rgba(0,0,0,0.55)] tracking-normal">
      <div className="h-[30px] shrink-0 bg-white flex items-center text-black">
        <FormAppIcon className="ml-[9px] w-[14px] h-[14px] shrink-0" />
        <span className="ml-[5px] w-[36px] text-[12px] tracking-[-0.3px]">Form1</span>
        <span className="ml-[586px] w-[10px] h-px shrink-0 bg-black"></span>
        <span className="ml-[35px] w-[10px] h-[10px] shrink-0 border border-black"></span>
        <svg viewBox="0 0 11 11" className="ml-[37px] w-[11px] h-[11px] shrink-0" fill="none" stroke="#000">
          <path d="M.5.500l10 10M10.500.500l-10 10" />
        </svg>
      </div>
      <div className="flex-1 bg-[#00fe9b] flex flex-col text-black">
        <h1 className="ml-[269px] mt-[22px] h-[36px] shrink-0 text-[34px] leading-[36px] font-['Lato',sans-serif] font-light italic tracking-[2.15px] whitespace-nowrap">Customer Data</h1>
        <div className="mt-[16px] shrink-0 flex">
          <span className="ml-[132px] mt-[7px] w-[95px] shrink-0 text-[21px] leading-[24px] font-['Lato',sans-serif] italic tracking-[0.6px]">Search:</span>
          <div className="w-[427px] shrink-0 flex flex-col">
            <span className="h-[26px] pl-[2px] text-[23px] leading-[20px] font-['Lato',sans-serif] italic">name1</span>
            <span className="h-[10px] bg-black"></span>
          </div>
        </div>
        <div className="ml-[12px] mt-[27px] w-[744px] h-[306px] shrink-0 border border-black bg-[#ababab] overflow-hidden text-[11.500px] tracking-[-0.7px] font-['Liberation_Sans',sans-serif]">
          <div className="grid grid-cols-[41px_repeat(6,100px)_101px]">
            <div className="h-[21px] bg-white border-r border-b border-r-[#a0a0a0] border-b-[#a0a0a0]"></div>
            {heads.map((h) => (
              <GridHead key={h} label={h} active={h === "LastName"} />
            ))}
            <div className="h-[21px] bg-white border-r border-[#a0a0a0]"></div>
            {cells.map((c) => (
              <GridCell key={c} label={c} />
            ))}
          </div>
        </div>
      </div>
    </div>
  );
}

export default function App() {
  return (
    <div className={`w-[1366px] h-[768px] relative overflow-hidden bg-[#2d2d30] flex flex-col text-[12px] tracking-[-0.42px] ${ui}`}>
      <MenuBar />
      <DebugToolbar />
      <ProcessToolbar />
      <div className="h-[621px] shrink-0 flex pt-[11px]">
        <div className="ml-[7px] w-[970px] shrink-0 flex flex-col">
          <EditorArea />
          <div className="mt-[8px] flex-1 flex min-h-0 pb-[7px]">
            <Watch />
            <ErrorList />
          </div>
        </div>
        <SolutionPanel />
        <SideTabs />
      </div>
      <StatusBar />
      <Taskbar />
      <FormWindow />
    </div>
  );
}
